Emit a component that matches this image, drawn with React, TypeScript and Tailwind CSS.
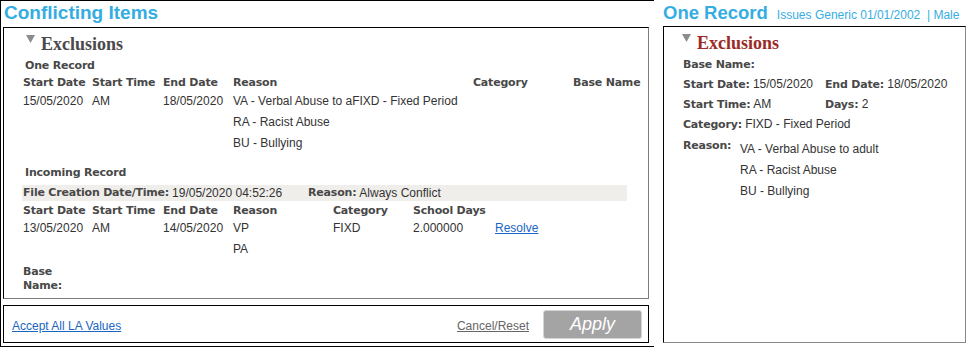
import { FC } from "react";

const Caret: FC = () => (
  <svg width="9" height="8" viewBox="0 0 9 8" className="mt-[6px] shrink-0">
    <polygon points="0,0 9,0 4.5,8" fill="#8c8c8c" />
  </svg>
);

const SectionHead: FC<{ red?: boolean; className?: string }> = ({ red, className }) => (
  <div className={`flex items-start h-[28px] ${className ?? ""}`}>
    <Caret />
    <span
      className={`ml-[6px] pt-[3px] leading-[24px] text-[18px] font-bold font-['Liberation_Serif',serif] ${
        red ? "text-[#9b2b26]" : "text-[#4a4a4a]"
      }`}
    >
      Exclusions
    </span>
  </div>
);

// labels use a wider bold face, closer to the original's Tahoma bold
const lbl = "font-['DejaVu_Sans',sans-serif] font-bold text-[11px] tracking-[-0.2px] text-[#484848]";

const oneRecordCols = ["w-[69px]", "w-[71px]", "w-[70px]", "w-[240px]", "w-[100px]", ""];
const incomingCols = ["w-[69px]", "w-[71px]", "w-[70px]", "w-[100px]", "w-[80px]", "w-[82px]", ""];

const App: FC = () => {
  return (
    <div className="w-[968px] h-[347px] flex bg-white font-['Liberation_Sans',Arial,sans-serif] text-[12px] text-[#333]">
      {/* left: conflicting items */}
      <section className="w-[654px] h-[347px] flex flex-col border-t border-l border-b border-black">
        <h1 className="h-[26px] pl-[3px] leading-[24px] text-[19px] font-bold text-[#35ade2]">
          Conflicting Items
        </h1>
        <div className="ml-[2px] w-[646px] h-[272px] border-t border-l border-t-black border-l-black border-r border-b border-r-[#7c7c7c] border-b-[#7c7c7c] pl-[19px] pt-[1px]">
          <SectionHead className="ml-[3px]" />
          <div className={`h-[18px] leading-[18px] pl-[2px] ${lbl}`}>One Record</div>
          <div className={`flex h-[16px] leading-[16px] ${lbl}`}>
            {["Start Date", "Start Time", "End Date", "Reason", "Category", "Base Name"].map((h, i) => (
              <div key={h} className={oneRecordCols[i]}>{h}</div>
            ))}
          </div>
          <div className="flex">
            <div className="w-[69px] leading-[21px]">15/05/2020</div>
            <div className="w-[71px] leading-[21px]">AM</div>
            <div className="w-[70px] leading-[21px]">18/05/2020</div>
            <div className="flex flex-col">
              <div className="leading-[21px]">VA - Verbal Abuse to aFIXD - Fixed Period</div>
              <div className="leading-[21px]">RA - Racist Abuse</div>
              <div className="leading-[21px]">BU - Bullying</div>
            </div>
          </div>

          <div className={`mt-[10px] h-[18px] leading-[18px] pl-[2px] ${lbl}`}>Incoming Record</div>
          <div className="mt-[3px] -ml-[1px] w-[605px] h-[16px] leading-[16px] bg-[#f0eeeb] flex pl-[1px]">
            <span className={lbl}>File Creation Date/Time:</span>
            <span className="ml-[3px] w-[136px]">19/05/2020 04:52:26</span>
            <span className={lbl}>Reason:</span>
            <span className="ml-[3px]">Always Conflict</span>
          </div>
          <div className={`mt-[2px] flex h-[15px] leading-[15px] ${lbl}`}>
            {["Start Date", "Start Time", "End Date", "Reason", "Category", "School Days"].map((h, i) => (
              <div key={h} className={incomingCols[i]}>{h}</div>
            ))}
          </div>
          <div className="flex">
            <div className="w-[69px] leading-[21px]">13/05/2020</div>
            <div className="w-[71px] leading-[21px]">AM</div>
            <div className="w-[70px] leading-[21px]">14/05/2020</div>
            <div className="w-[100px] flex flex-col">
              <div className="leading-[21px]">VP</div>
              <div className="leading-[21px]">PA</div>
            </div>
            <div className="w-[80px] leading-[21px]">FIXD</div>
            <div className="w-[82px] leading-[21px]">2.000000</div>
            <a href="#" className="leading-[21px] h-[21px] text-[#1a66c2] underline">Resolve</a>
          </div>
          <div className={`mt-[5px] w-[50px] leading-[14px] ${lbl}`}>Base Name:</div>
        </div>

        <div className="mt-[6px] ml-[2px] w-[646px] h-[38px] border border-black flex items-center pl-[8px] pr-[6px]">
          <a href="#" className="mt-[4px] text-[#1a66c2] underline">Accept All LA Values</a>
          <a href="#" className="ml-auto mt-[4px] mr-[14px] text-[#666] underline">Cancel/Reset</a>
          <button className="w-[99px] h-[29px] rounded-[3px] bg-[#a4a4a4] border border-[#d4d4d4] text-white italic text-[18px] leading-[26px]">
            Apply
          </button>
        </div>
      </section>

      {/* right: one record */}
      <section className="flex-1 pl-[9px] flex flex-col">
        <div className="h-[26px] flex items-baseline pt-[1px] text-[#35ade2]">
          <h2 className="text-[18.5px] font-bold leading-[24px]">One Record</h2>
          <span className="ml-[9px] text-[12px]">Issues Generic 01/01/2002&nbsp; | Male</span>
        </div>
        <div className="w-[303px] h-[317px] border-t border-l border-t-black border-l-black border-r border-b border-r-[#888] border-b-[#888] pl-[19px] pt-[1px]">
          <SectionHead red className="-ml-[1px]" />
          <div className={`h-[18px] leading-[18px] ${lbl}`}>Base Name:</div>
          <div className="flex h-[21px] leading-[21px]">
            <div className="w-[142px]"><span className={lbl}>Start Date:</span> 15/05/2020</div>
            <div><span className={lbl}>End Date:</span> 18/05/2020</div>
          </div>
          <div className="flex h-[19px] leading-[19px]">
            <div className="w-[142px]"><span className={lbl}>Start Time:</span> AM</div>
            <div><span className={lbl}>Days:</span> 2</div>
          </div>
          <div className="h-[21px] leading-[21px]"><span className={lbl}>Category:</span> FIXD - Fixed Period</div>
          <div className="flex">
            <div className={`w-[57px] leading-[16px] pt-[3px] ${lbl}`}>Reason:</div>
            <div className="flex flex-col pt-[4px]">
              <div className="leading-[21px]">VA - Verbal Abuse to adult</div>
              <div className="leading-[21px]">RA - Racist Abuse</div>
              <div className="leading-[21px]">BU - Bullying</div>
            </div>
          </div>
        </div>
      </section>
    </div>
  );
};

export default App;
